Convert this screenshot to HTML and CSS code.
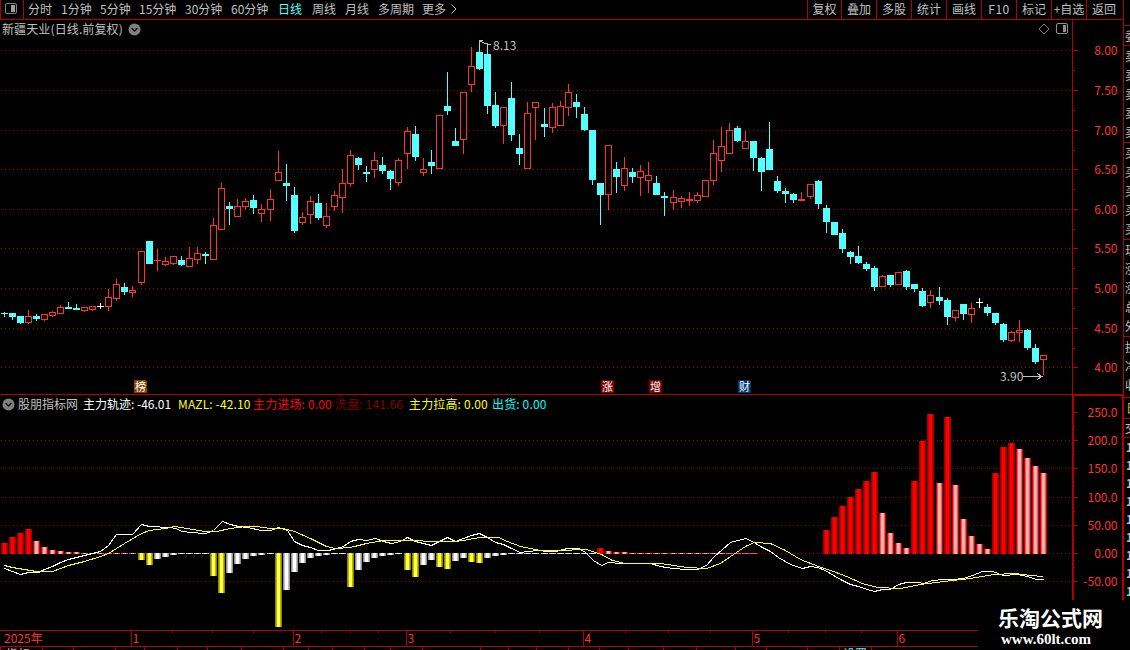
FILE: index.html
```
<!DOCTYPE html>
<html lang="zh-CN">
<head>
    <meta charset="UTF-8">
    <meta name="viewport" content="width=device-width, initial-scale=1.0">
    <title>新疆天业 日线</title>
    <link rel="stylesheet" href="styles.css">
</head>
<body>

<div class="app">
    <div class="main">
        <!-- Toolbar -->
        <div class="toolbar">
            <div class="layout-btn">
                <svg width="13" height="12" viewBox="0 0 13 12">
                    <rect x="0.5" y="0.5" width="11" height="10" rx="1.5" fill="none" stroke="#808080"/>
                    <rect x="6" y="2" width="4" height="7" fill="#a0a0a0"/>
                </svg>
            </div>
            <div class="periods">
                <span>分时</span>
                <span>1分钟</span>
                <span>5分钟</span>
                <span>15分钟</span>
                <span>30分钟</span>
                <span>60分钟</span>
                <span class="active">日线</span>
                <span>周线</span>
                <span>月线</span>
                <span>多周期</span>
                <span>更多</span>
                <svg width="8" height="20" viewBox="0 0 8 20"><path d="M1.5 4.5L6 9L1.5 13.5" fill="none" stroke="#c0c0c0"/></svg>
            </div>
            <div class="tools">
                <span>复权</span>
                <span>叠加</span>
                <span>多股</span>
                <span>统计</span>
                <span>画线</span>
                <span class="latin">F10</span>
                <span>标记</span>
                <span>+自选</span>
                <span>返回</span>
            </div>
        </div>

        <!-- Candlestick panel -->
        <div class="panel price-panel">
            <svg class="chart" id="priceChart" width="1123" height="375" viewBox="0 20 1123 375" shape-rendering="crispEdges"></svg>
            <div class="price-head">
                <span class="stock">新疆天业(日线.前复权)</span>
                <svg width="13" height="13" viewBox="0 0 13 13">
                    <circle cx="6.5" cy="6.5" r="6" fill="#808080"/>
                    <path d="M3.5 5L6.5 8L9.5 5" fill="none" stroke="#111" stroke-width="1.4"/>
                </svg>
                <div class="corner">
                    <svg width="12" height="12" viewBox="0 0 12 12"><path d="M6 1L11 6L6 11L1 6Z" fill="none" stroke="#808080"/></svg>
                    <svg width="13" height="12" viewBox="0 0 13 12">
                        <rect x="0.5" y="0.5" width="11" height="10" rx="1.5" fill="none" stroke="#909090"/>
                        <rect x="7" y="2" width="3" height="7" fill="#909090"/>
                    </svg>
                </div>
            </div>
        </div>

        <!-- Indicator panel -->
        <div class="panel ind-panel">
            <svg class="chart" id="indChart" width="1123" height="235" viewBox="0 395 1123 235" shape-rendering="crispEdges"></svg>
            <div class="ind-head">
                <svg width="13" height="13" viewBox="0 0 13 13">
                    <circle cx="6.5" cy="6.5" r="6" fill="#808080"/>
                    <path d="M3.5 5L6.5 8L9.5 5" fill="none" stroke="#111" stroke-width="1.4"/>
                </svg>
                <span class="gray">股朋指标网</span>
                <span class="white">主力轨迹: -46.01</span>
                <span class="yellow">MAZL: -42.10</span>
                <span class="red">主力进场: 0.00</span>
                <span class="maroon">洗盘: 141.66</span>
                <span class="yellow">主力拉高: 0.00</span>
                <span class="cyan">出货: 0.00</span>
            </div>
        </div>

        <!-- Date axis and the tab row under it -->
        <svg id="dateAxis" width="1123" height="20" viewBox="0 630 1123 20" shape-rendering="crispEdges"></svg>
    </div>

    <!-- Quote panel, runs off the right edge -->
    <div class="side">
        <div class="side-box single"><span>委比</span></div>
        <div class="side-box"><span>卖五</span><span>卖四</span><span>卖三</span><span>卖二</span><span>卖一</span></div>
        <div class="side-box"><span>买一</span><span>买二</span><span>买三</span><span>买四</span><span>买五</span></div>
        <div class="side-box"><span>现价</span><span>涨跌</span><span>涨幅</span><span>总量</span><span>外盘</span></div>
        <div class="side-box three"><span>换手</span><span>净资</span><span>收益</span></div>
        <div class="side-box tab"><span>日线</span></div>
        <div class="side-box head"><span>交易</span></div>
        <div class="side-box ticks"><span>14:56</span><span>14:56</span><span>14:56</span><span>14:56</span><span>14:56</span><span>14:56</span><span>14:56</span><span>14:56</span><span>14:57</span></div>
    </div>

    <div class="watermark">
        <div class="wm-name">乐淘公式网</div>
        <div class="wm-url">www.60lt.com</div>
    </div>
</div>

<script src="chart.js"></script>
</body>
</html>
```
FILE: styles.css
```
body {
    margin: 0;
    background: #000;
    overflow: hidden;
    font-family: "Noto Sans CJK SC", "Liberation Sans", sans-serif;
    font-size: 12px;
    line-height: 18px;
    color: #c0c0c0;
    white-space: nowrap;
}

.app {
    position: relative;
    display: flex;
    width: 1130px;
    height: 650px;
    overflow: hidden;
}

.main {
    display: flex;
    flex-direction: column;
    width: 1123px;
    flex: none;
}

/* Toolbar */
.toolbar {
    display: flex;
    box-sizing: border-box;
    height: 20px;
    border-bottom: 1px solid #b00000;
}

.layout-btn {
    box-sizing: border-box;
    width: 24px;
    padding: 3px 0 0 4px;
    border-left: 1px solid #b00000;
    border-right: 1px solid #b00000;
    line-height: 0;
}

.periods {
    display: grid;
    grid-template-columns: 33px 39px 39px 46px 46px 47px 34px 33px 33px 44px 28px 10px;
    margin-left: 4px;
}

.active {
    color: #54ffff;
}

.tools {
    display: grid;
    grid-template-columns: 34px repeat(8, 35px);
    margin-left: auto;
    margin-right: 2px;
}

.tools span {
    box-sizing: border-box;
    border-left: 1px solid #b00000;
    text-align: center;
}

.tools .latin {
    letter-spacing: 0.5px;
}

/* Chart panels */
.panel {
    position: relative;
    flex: none;
}

.price-panel {
    height: 375px;
}

.ind-panel {
    height: 235px;
}

.chart {
    position: absolute;
    left: 0;
    top: 0;
}

.price-head {
    position: relative;
    display: flex;
    align-items: center;
    width: 1067px;
    height: 18px;
    padding-left: 2px;
    gap: 5px;
}

.stock {
    letter-spacing: 0.12px;
}

.corner {
    display: flex;
    gap: 6px;
    margin-left: auto;
}

.ind-head {
    position: relative;
    display: grid;
    grid-template-columns: 16px 65px 95px 75px 82px 74px 83px 60px;
    align-items: center;
    height: 16px;
    padding-left: 2px;
    letter-spacing: 0.15px;
}

.gray { color: #c0c0c0; letter-spacing: 0; }
.white { color: #fff; letter-spacing: 0; }
.yellow { color: #ffff00; }
.red { color: #ff0000; }
.maroon { color: #800000; }
.cyan { color: #00ffff; }

svg text {
    font-size: 12px;
    fill: #ff3232;
}

svg .mark {
    fill: #c0c0c0;
}

svg .badge {
    font-size: 11px;
    fill: #fff;
}

#dateAxis {
    display: block;
}

/* Side panel */
.side {
    box-sizing: border-box;
    width: 80px;
    flex: none;
    height: 600px;
    padding-top: 25px;
    border-left: 1px solid #b00000;
}

.side-box {
    display: flex;
    flex-direction: column;
    box-sizing: border-box;
    height: 97px;
    padding-left: 1px;
    border-top: 1px solid #b00000;
    line-height: 19px;
}

.side-box.single { height: 20px; }
.side-box.three { height: 61px; }
.side-box.tab { height: 21px; padding-left: 2px; color: #c8c800; }
.side-box.head { height: 19px; line-height: 17px; }
.side-box.ticks { height: auto; padding-left: 2px; line-height: 18px; font-weight: bold; }

/* Site mark over the lower right corner */
.watermark {
    position: absolute;
    left: 978px;
    top: 600px;
    width: 152px;
    height: 50px;
    background: #000;
    color: #fff;
}

.wm-name {
    padding: 4px 0 0 20px;
    font-size: 21px;
    font-weight: bold;
    line-height: 27px;
}

.wm-url {
    padding-left: 23px;
    font-family: "Liberation Serif", serif;
    font-size: 15px;
    font-weight: bold;
    line-height: 16px;
}
```
FILE: chart.js
```
const RED = '#ff3232';
const CYAN = '#54ffff';
const LINE = '#b00000';

// Candles: type (u = up, d = down, w = flat), high, body top, body bottom, low
const candles = `
d312,313,314,317 d313,313,317,320 d316,316,323,324 u310,316,323,324 d314,316,319,321 u314,314,320,321
u311,312,316,317 u305,307,314,314 d302,307,309,309 d304,308,310,310 u307,307,311,312 u306,306,310,311
w303,306,307,309 u289,297,307,311 u279,284,299,301 d283,287,292,295 u286,290,293,297 u251,251,283,285
d241,241,264,264 u249,260,261,271 u257,261,265,266 u256,256,264,265 d256,260,265,266 u247,258,267,267
u247,253,260,264 d252,254,256,264 u218,225,260,260 u183,188,230,230 d202,206,209,225 u199,206,217,217
u198,201,207,210 d195,200,208,214 u204,209,214,222 u189,199,210,221 u151,172,181,181 d164,183,186,201
d187,195,231,233 u212,217,223,225 u196,201,215,224 d194,203,218,220 u203,216,226,228 u191,195,207,211
u169,183,198,213 u150,155,184,187 d157,158,165,170 d166,172,174,182 u152,160,170,178 d157,165,171,174
d170,171,179,190 u158,160,183,186 u127,131,154,169 d126,134,157,161 u158,169,173,176 d150,162,166,174
u115,115,169,169 d72,106,111,115 d128,141,146,146 u92,92,140,154 u47,66,85,92 d40,52,69,70
d43,54,106,114 d92,105,126,128 u107,107,126,144 d82,98,135,141 d134,148,154,165 u102,113,169,169
u102,102,108,140 d108,124,127,137 u103,107,128,133 u101,106,126,126 u84,92,108,116 d94,102,107,118
d107,114,130,131 d130,130,180,185 d183,183,195,225 u145,145,195,210 d162,169,177,193 u157,168,186,191
d168,172,177,183 u165,171,178,196 u162,175,181,193 d176,183,195,195 d192,196,198,216 u190,197,203,210
u196,198,202,208 u192,199,201,206 u192,195,201,203 u180,180,197,197 u140,153,181,185 u127,146,161,172
u123,130,154,154 d126,128,141,142 u131,141,149,149 d141,141,158,171 d157,158,172,191 d122,149,170,170
d176,181,191,193 d188,191,194,203 d193,194,200,203 u192,199,201,201 u184,184,197,199 d180,181,204,209
d205,208,222,233 d222,222,235,235 d229,233,249,253 d251,252,257,264 d246,256,263,264 d262,264,269,271
d266,268,287,291 u275,276,287,287 d275,275,285,287 u272,272,285,285 d270,271,287,290 d284,284,289,292
d288,291,306,307 u290,295,303,308 d287,297,301,305 d298,300,317,325 u310,310,318,321 d304,304,314,320
u303,308,315,323 w298,302,303,308 d304,307,313,316 d313,313,323,325 d323,324,340,342 u331,332,341,342
u320,330,333,342 d329,330,348,350 d344,348,362,364 u355,355,360,375`.trim().split(/\s+/);

// Indicator bars: start index -> colour letter and end of the bar
const barRuns = {
    0: 'r543 r537 r533 r529 p541 p547 p550 p551 p552 p552',
    17: 'y560 y565 w559 w557 w555',
    26: 'y576 y593 w573 w564 w559 w556 w555',
    34: 'y627 w590 w572 w563 w558 w556 w555',
    43: 'y587 w570 w562 w558 w556 w555',
    50: 'y570 y577 w565 w560 y567 y569 w561 w558 y562 y563 w558 w556 w555',
    74: 'r548 p551 p552 p552',
    102: 'r530 r517 r506 r497 r489 r481 r472 p513 p533 p543 p548 r481 r441 r414 p483 r417 p485 p519 p536 p544 p549 r473 r447 r443 p449 p458 p466 p473'
};

// Three shades per bar: edge, inner, middle
const shades = {
    r: ['#a00000', '#c80000', '#ff0000'],
    p: ['#c80000', '#ff5050', '#ffb0b0'],
    y: ['#888800', '#b8b800', '#ffff50'],
    w: ['#909090', '#c0c0c0', '#ffffff']
};

const whiteLine = '4,568 12,571 20,574 28,572 38,572 44,569 52,566 60,562 68,559 76,557 88,554 100,551 108,545 116,534 132,534 141,524 149,526 170,527 175,528 182,531 190,532 205,533 213,530 222,521 230,524 238,526 247,527 261,530 270,530 278,527 284,529 287,530 294,541 302,545 310,547 318,550 327,550 333,549 343,546 350,541 358,539 366,540 375,538 383,541 391,543 400,541 407,537 415,541 423,543 431,545 439,541 447,537 455,541 463,538 471,535 479,533 487,537 495,542 503,544 511,548 520,552 528,551 537,550 547,551 555,551 567,548 578,548 585,552 593,560 601,565 608,562 620,563 650,563 660,566 672,568 687,569 697,569 706,565 714,556 722,549 730,542 745,538 750,540 762,547 770,551 778,557 790,564 802,568 810,566 817,567 825,570 833,575 842,580 850,584 858,586 867,589 874,591 882,589 890,589 898,584 906,582 917,582 923,583 932,580 943,579 953,579 963,578 972,575 982,571 992,571 1003,575 1017,574 1027,576 1036,579 1043,579';
const yellowLine = '4,565 12,567 36,571 52,571 68,565 84,561 100,556 108,553 124,543 141,533 149,530 165,528 174,526 186,528 205,531 216,531 230,528 245,526 256,526 270,528 283,528 294,531 310,538 326,546 335,548 350,547 366,543 383,540 415,540 430,541 455,541 463,540 479,537 498,537 507,541 520,546 540,550 557,550 586,549 601,554 612,560 625,563 660,563 687,567 706,568 720,563 733,554 745,546 754,542 770,543 785,550 800,559 818,566 833,571 846,576 862,583 877,587 900,588 920,584 943,581 970,578 993,574 1015,573 1030,575 1043,576';

function rect(x, y, w, h, fill) {
    return `<rect x="${x}" y="${y}" width="${w}" height="${h}" fill="${fill}"/>`;
}

function text(x, y, str, cls, anchor) {
    return `<text x="${x}" y="${y}" class="${cls || ''}" text-anchor="${anchor || 'start'}">${str}</text>`;
}

function grid(y) {
    return `<path d="M1 ${y + 0.5}H1070" stroke="${LINE}" stroke-dasharray="1 3"/>`;
}

// Middle pixel column of candle i
function cx(i) {
    return Math.floor(4.015 + i * 8.0603);
}

function drawPrice() {
    let s = '';
    const rows = [50, 90, 130, 169, 209, 248, 288, 328, 367];
    rows.forEach((y, i) => {
        s += grid(y);
        s += rect(1073, y, 5, 1, LINE);
        if (i < 8) s += rect(1073, y + 20, 2, 1, LINE);
        s += text(1117.5, y + 5, (8 - i * 0.5).toFixed(2), '', 'end');
    });

    candles.forEach((c, i) => {
        const x = cx(i);
        const [hi, top, bot, lo] = c.slice(1).split(',').map(Number);
        if (c[0] === 'u') {
            s += rect(x, hi, 1, top - hi, RED) + rect(x, bot, 1, lo - bot, RED);
            if (bot - top < 3) {
                s += rect(x - 3, top, 7, bot - top, RED);
            } else {
                s += rect(x - 3, top, 7, bot - top, RED) + rect(x - 2, top + 1, 5, bot - top - 2, '#000');
            }
        } else {
            const color = c[0] === 'd' ? CYAN : '#fff';
            s += rect(x, hi, 1, lo - hi, color) + rect(x - 3, top, 7, bot - top, color);
        }
    });

    // High and low marks
    s += '<path d="M479.5 44V40.5H483M480 41L485 43.5L491 45" fill="none" stroke="#c0c0c0"/>';
    s += text(493, 50, '8.13', 'mark');
    s += '<path d="M1023 376.5H1042M1037 373.5L1042 376.5L1037 379.5" fill="none" stroke="#c0c0c0"/>';
    s += text(1000, 381, '3.90', 'mark');

    // Event badges
    [[134, '榜', '#884400'], [601, '涨', '#800000'], [649, '增', '#800000'], [738, '财', '#003870']].forEach(([x, ch, color]) => {
        s += `<path d="M${x} 380H${x + 11}L${x + 13} 382V393H${x}Z" fill="${color}"/>`;
        s += text(x + 1, 390.5, ch, 'badge');
    });

    s += rect(1072, 20, 1, 375, LINE) + rect(0, 394, 1123, 1, LINE);
    document.getElementById('priceChart').innerHTML = s;
}

function drawIndicator() {
    let s = '';
    [440, 468, 497, 525, 553, 581].forEach(y => s += grid(y));

    const labels = ['250.0', '200.0', '150.0', '100.0', '50.00', '0.00', '-50.00'];
    [412, 440, 468, 497, 525, 553, 581].forEach((y, i) => {
        s += rect(1074, y, 4, 1, LINE);
        if (i < 6) s += rect(1074, y + 14, 1, 1, LINE);
        s += text(1117.5, y + 5, labels[i], '', 'end');
    });

    // Zero level dashes
    for (let i = 0; i < 94; i++) {
        const warm = i < 17 || i > 77;
        s += rect(cx(i) - 3, 553, 7, 1, warm ? '#ff5050' : '#c0c0c0');
        if (i < 90) s += rect(cx(i) - 1, 553, 3, 1, warm ? '#ffb0b0' : '#fff');
        if (i > 77) s += rect(cx(i) + 4, 553, 1, 1, LINE);
    }

    for (const start in barRuns) {
        barRuns[start].split(' ').forEach((b, k) => {
            const x = cx(Number(start) + k);
            const end = Number(b.slice(1));
            const up = end < 553;
            const y = up ? end : 553;
            const h = up ? 554 - end : end - 553;
            const [edge, inner, mid] = shades[b[0]];
            s += rect(x - 3, y, 7, h, edge) + rect(x - 2, y, 5, h, inner) + rect(x - 1, y, 3, h, mid);
        });
    }

    s += `<polyline points="${whiteLine}" transform="translate(0.5 0.5)" fill="none" stroke="#fff"/>`;
    s += `<polyline points="${yellowLine}" transform="translate(0.5 0.5)" fill="none" stroke="#ff0"/>`;

    // Frame of the value axis
    s += rect(1072, 395, 2, 205, LINE) + rect(1072, 395, 51, 1, LINE) + rect(1122, 395, 1, 205, LINE);
    document.getElementById('indChart').innerHTML = s;
}

function drawDates() {
    let s = rect(0, 630, 978, 1, LINE) + rect(0, 646, 978, 1, LINE) + text(4, 643, '2025年');
    [131, 293, 406, 583, 752, 897].forEach((x, i) => {
        s += rect(x, 630, 1, 16, LINE) + text(x + 1.5, 643, i + 1);
    });
    [172, 212, 253, 321, 350, 378, 450, 495, 539, 625, 668, 710, 788, 825, 861].forEach(x => {
        s += rect(x, 631, 1, 2, LINE);
    });
    // Indicator tabs, cut off by the window edge
    [0, 42, 73, 115, 144, 177, 207, 241, 283, 308, 332, 364, 390, 422, 480, 508, 536, 568, 599, 628, 663, 696, 735, 766, 807, 839, 871].forEach(x => {
        s += rect(x, 647, 1, 3, LINE);
    });
    s += text(6, 658.5, '指标', 'mark');
    s += `<text x="843" y="658.5" style="fill:${CYAN}">设置</text>`;
    document.getElementById('dateAxis').innerHTML = s;
}

drawPrice();
drawIndicator();
drawDates();
```
